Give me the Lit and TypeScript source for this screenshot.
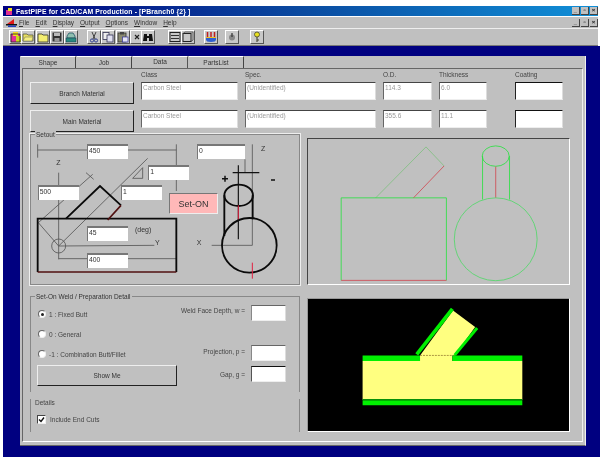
import { LitElement, html, svg, css } from "lit";
import { customElement } from "lit/decorators.js";

// toolbar glyphs, all drawn on a 12x12 box
const ICONS = {
  model: svg`<rect x="1" y="3" width="9" height="8" fill="#e0309a"/><rect x="3" y="1" width="5" height="4" fill="#f4e020"/><path d="M6 5h5v6H6z" fill="#c8d820"/><path d="M1 3h9v8H1z" fill="none" stroke="#222" stroke-width=".8"/>`,
  open: svg`<path d="M1 3h4l1 1h5v6H1z" fill="#e8e060" stroke="#554" stroke-width=".8"/><path d="M3 6h8l-1 4H1z" fill="#f4ee80" stroke="#665" stroke-width=".5"/>`,
  folder: svg`<path d="M1 3h4l1 1h5v7H1z" fill="#f4ee70" stroke="#443" stroke-width=".9"/>`,
  save: svg`<rect x="1.5" y="1.5" width="9" height="9" fill="#333"/><rect x="3" y="2" width="6" height="3" fill="#bbb"/><rect x="3.5" y="7" width="5" height="3.5" fill="#999"/>`,
  print: svg`<path d="M4 2h4l2 3v2H2V5z" fill="#8fbfb0" stroke="#256" stroke-width=".8"/><rect x="1" y="7" width="10" height="4" fill="#2a8a80" stroke="#134" stroke-width=".5"/>`,
  cut: svg`<path d="M4 1l3 7M8 1L5 8" stroke="#333" stroke-width=".9" fill="none"/><circle cx="4" cy="9.5" r="1.6" fill="none" stroke="#238" stroke-width=".9"/><circle cx="8" cy="9.5" r="1.6" fill="none" stroke="#238" stroke-width=".9"/>`,
  copy: svg`<rect x="1" y="1.5" width="6" height="7" fill="#eee" stroke="#335" stroke-width=".8"/><rect x="5" y="4" width="6" height="7" fill="#e0e0f0" stroke="#335" stroke-width=".8"/>`,
  paste: svg`<rect x="1" y="2" width="8" height="9" fill="#8a8a70" stroke="#333" stroke-width=".8"/><rect x="3" y="1" width="4" height="2.5" fill="#444"/><rect x="5.5" y="6" width="5.5" height="5" fill="#e4e4f4" stroke="#339" stroke-width=".7"/>`,
  del: svg`<path d="M4 4l4 4M8 4l-4 4" stroke="#222" stroke-width="1.1"/>`,
  find: svg`<path d="M2 3h3v2h2V3h3l1 7H7V7H5v3H1z" fill="#111"/>`,
  list: svg`<rect x="1" y="1.5" width="10" height="9" fill="none" stroke="#222"/><path d="M2 4.5h8M2 7.5h8" stroke="#333"/>`,
  frame: svg`<rect x="1" y="2.5" width="8" height="8" fill="none" stroke="#222"/><path d="M1 2.5l2-1.5h8v8l-2 1.5" fill="none" stroke="#444" stroke-width=".8"/>`,
  pipe: svg`<path d="M2.5 1v5M6 1v5M9.500 1v5" stroke="#c02020" stroke-width="1.500"/><path d="M1 7h10v1.500a5 2.500 0 0 1-10 0z" fill="#3060d0"/><path d="M1 6.500h10" stroke="#f0c020"/>`,
  weld: svg`<circle cx="6" cy="6.500" r="3" fill="#888"/><path d="M6 2v4" stroke="#333" stroke-width="1.200"/>`,
  key: svg`<circle cx="6" cy="3.500" r="2.500" fill="#e8e020" stroke="#443" stroke-width=".8"/><path d="M6 6v5M6 9h2" stroke="#443" stroke-width="1.100"/>`,
};

const TOOLS: { icon: keyof typeof ICONS; gap: number }[] = [
  { icon: "model", gap: 0 },
  { icon: "open", gap: -2 },
  { icon: "folder", gap: 1 },
  { icon: "save", gap: 0 },
  { icon: "print", gap: 0 },
  { icon: "cut", gap: 9 },
  { icon: "copy", gap: 0 },
  { icon: "paste", gap: 1 },
  { icon: "del", gap: 0 },
  { icon: "find", gap: -3 },
  { icon: "list", gap: 13 },
  { icon: "frame", gap: -1 },
  { icon: "pipe", gap: 9 },
  { icon: "weld", gap: 7 },
  { icon: "key", gap: 11 },
];

const MENUS = [
  ["F", "ile"],
  ["E", "dit"],
  ["D", "isplay"],
  ["O", "utput"],
  ["O", "ptions"],
  ["W", "indow"],
  ["H", "elp"],
];

// inputs over the setout sketch, in the sketch's own units (3 per pixel)
const SETOUT_FIELDS = [
  { value: "450", x: 198, y: 55 },
  { value: "0", x: 528, y: 55, w: 48 },
  { value: "1", x: 382, y: 118 },
  { value: "500", x: 50, y: 178 },
  { value: "1", x: 300, y: 178 },
  { value: "45", x: 198, y: 300 },
  { value: "400", x: 198, y: 380 },
];

@customElement("app-root")
export class AppRoot extends LitElement {
  static styles = css`
    :host {
      display: block;
      width: 602px;
      height: 461px;
      box-sizing: border-box;
      padding: 6px 2px 4px 3px;
      background: #fff;
      font-family: "Liberation Sans", Arial, sans-serif;
      font-size: 6.5px;
      color: #333;
      overflow: hidden;
      filter: blur(0.35px);
    }
    .title {
      display: flex;
      align-items: center;
      height: 10px;
      margin-right: 2px;
      padding-left: 2px;
      background: linear-gradient(90deg, #000080 0%, #0a4aa0 50%, #1090d8 100%);
      color: #fff;
      font-weight: 700;
      font-size: 6.85px;
      letter-spacing: 0.12px;
      gap: 2px;
    }
    .spacer {
      flex: 1;
    }
    .ctrls {
      display: flex;
      gap: 1px;
    }
    .ctrl {
      width: 8px;
      height: 8px;
      background: #c0c0c0;
      border-right: 1px solid #444;
      border-bottom: 1px solid #444;
      box-sizing: border-box;
      color: #111;
      font-size: 6px;
      line-height: 6px;
      text-align: center;
      font-weight: 700;
    }
    .menu {
      display: flex;
      align-items: center;
      height: 11px;
      margin-top: 1px;
      margin-right: 2px;
      padding-left: 3px;
      background: #c0c0c0;
      border-bottom: 1px solid #eee;
    }
    .menu svg {
      margin-right: 2px;
    }
    .menu span {
      margin-right: 6px;
      font-size: 6.5px;
      color: #333;
    }
    .menu u {
      text-decoration: underline;
    }
    .tools {
      display: flex;
      align-items: center;
      height: 17px;
      padding-left: 6px;
      margin-right: 2px;
      background: #c0c0c0;
      border-bottom: 1px solid #777;
      box-sizing: border-box;
    }
    .tool {
      display: flex;
      align-items: center;
      justify-content: center;
      width: 14px;
      height: 14px;
      box-sizing: border-box;
      background: #c8c8c8;
      border: 1px solid;
      border-color: #fff #555 #555 #fff;
    }
    .desk {
      height: 411px;
      box-sizing: border-box;
      padding: 10px 14px 11px 17px;
      background: #000080;
    }
    .panel {
      height: 390px;
      display: flex;
      flex-direction: column;
      background: #c0c0c0;
      box-sizing: border-box;
      border-right: 1px solid #eee;
      border-bottom: 1px solid #666;
    }
    .tabs {
      display: flex;
      height: 12px;
      padding-left: 1px;
    }
    .tab {
      width: 55px;
      margin-right: 1px;
      text-align: center;
      line-height: 11px;
      border-top: 1px solid #fff;
      border-right: 1px solid #444;
      box-sizing: border-box;
    }
    .tab.on {
      line-height: 9px;
      border-right: 1px solid #555;
    }
    .page {
      flex: 1;
      margin: 0 2px 3px 2px;
      padding: 1px 0 0 7px;
      border: 1px solid;
      border-color: #666 #eee #fff #666;
      box-sizing: border-box;
    }
    .mat {
      display: grid;
      grid-template-columns: 104px 97px 131px 49px 48px 69px;
      grid-template-rows: 12px 22px 28px;
      column-gap: 7px;
    }
    .mat .head {
      line-height: 9px;
      color: #444;
    }
    .mat .row2 {
      margin-top: 6px;
    }
    .mat .coat {
      justify-self: end;
      width: 48px;
    }
    .btn {
      display: flex;
      align-items: center;
      justify-content: center;
      background: #c0c0c0;
      border: 1px solid;
      border-color: #eee #222 #222 #eee;
      box-sizing: border-box;
      color: #333;
    }
    .field {
      height: 18px;
      background: #fff;
      border-top: 1px solid #444;
      border-left: 1px solid #666;
      border-right: 1px solid #ddd;
      border-bottom: 1px solid #eee;
      box-sizing: border-box;
      padding: 1px;
      color: #999;
      line-height: 8px;
    }
    .field.dark {
      border-color: #111 #ddd #eee #222;
    }
    .field.blank {
      height: 16px;
      border-color: #666 #ddd #eee #888;
    }
    .field.blank.dark {
      border-color: #111 #ddd #eee #555;
    }
    .lower {
      display: grid;
      grid-template-columns: 270px 263px;
      column-gap: 7px;
      margin-top: 2px;
    }
    .setout {
      position: relative;
      height: 151px;
      border: 1px solid #888;
      outline: 1px solid #eee;
      box-sizing: border-box;
    }
    .setout svg {
      display: block;
    }
    .legend {
      position: absolute;
      left: 4px;
      top: -4px;
      padding: 0 1px;
      background: #c0c0c0;
      line-height: 7px;
      color: #333;
    }
    .sf {
      position: absolute;
      width: 41px;
      height: 15px;
      background: #fff;
      border-top: 2px solid #777;
      border-left: 1px solid #777;
      box-sizing: border-box;
      padding-left: 1px;
      color: #333;
      font-size: 6.8px;
      line-height: 10px;
    }
    .seton {
      position: absolute;
      left: 138px;
      top: 58px;
      width: 49px;
      height: 21px;
      display: flex;
      align-items: center;
      justify-content: center;
      background: #ffb8b8;
      border: 1px solid;
      border-color: #777 #eee #eee #777;
      box-sizing: border-box;
      color: #333;
      font-size: 9px;
    }
    .view {
      height: 147px;
      margin-top: 4px;
      display: block;
      background: #c0c0c0;
      border: 1px solid;
      border-color: #444 #fff #fff #444;
      box-sizing: border-box;
    }
    .view.black {
      height: 134px;
      margin-top: 13px;
      background: #000;
      border-color: #999 #fff #fff #999;
    }
    .weld-col {
      margin-top: 11px;
    }
    .weld {
      position: relative;
      display: flex;
      justify-content: space-between;
      height: 96px;
      padding: 7px 13px 0 6px;
      border: 1px solid #888;
      border-bottom: 0;
      box-sizing: border-box;
    }
    .opts {
      display: flex;
      flex-direction: column;
      width: 140px;
    }
    .opt {
      display: flex;
      align-items: center;
      gap: 3px;
      height: 20px;
      padding-left: 1px;
      color: #444;
    }
    .dot {
      width: 8px;
      height: 8px;
      border-radius: 50%;
      background: #fff;
      border: 1px solid;
      border-color: #666 #eee #eee #666;
      box-sizing: border-box;
      display: flex;
      align-items: center;
      justify-content: center;
    }
    .dot.on::after {
      content: "";
      width: 3px;
      height: 3px;
      border-radius: 50%;
      background: #222;
    }
    .opts .btn {
      height: 21px;
      margin-top: 1px;
    }
    .depths {
      display: flex;
      flex-direction: column;
      gap: 5px;
      margin-top: 1px;
    }
    .depth {
      display: flex;
      align-items: center;
      justify-content: flex-end;
      gap: 6px;
      color: #444;
    }
    .depth .field {
      width: 35px;
    }
    .depth.first {
      margin-bottom: 19px;
    }
    .depth.first span {
      margin-top: -5px;
    }
    .depth.mid span {
      margin-top: -4px;
    }
    .details {
      box-sizing: border-box;
      height: 33px;
      margin-top: 7px;
      padding-left: 4px;
      border-left: 1px solid #888;
      border-right: 1px solid #888;
      color: #444;
      line-height: 7px;
    }
    .check {
      display: flex;
      align-items: center;
      gap: 4px;
      margin-top: 9px;
      padding-left: 2px;
    }
    .box {
      width: 7px;
      height: 7px;
      background: #fff;
      border: 1px solid;
      border-color: #444 #eee #eee #444;
      display: block;
    }
    .box svg {
      display: block;
    }
  `;

  private renderSetoutSketch() {
    return html`<svg width="270" height="151" viewBox="30 27 810 453">
      <g fill="none" stroke="#555" stroke-width="2.500">
        <path d="M50 55V95M50 72H466M466 55V195"/>
        <path d="M113 140V400M113 398H466M113 360L400 358"/>
        <path d="M380 97L113 360M52 290L215 145M195 140L218 160M52 290L113 360"/>
        <path d="M335 157L365 125V157Z"/>
        <circle cx="113" cy="360" r="21"/>
        <path d="M572 358H694M694 55V358M672 100V140"/>
      </g>
      <g fill="none" stroke="#0a0a0a" stroke-width="5.500">
        <path d="M135 278L237 180L300 238"/>
        <path d="M50 438V278H466V438"/>
        <ellipse cx="653" cy="208" rx="43" ry="32"/>
        <path d="M610 208V330M695 208V280"/>
        <circle cx="685" cy="358" r="82"/>
      </g>
      <path d="M652 118V340M635 140H715" stroke="#111" stroke-width="3.500"/>
      <path d="M300 238L260 282M50 438H466" stroke="#501010" stroke-width="5" fill="none"/>
      <path d="M652 238V280M694 410V458" stroke="#e02040" stroke-width="3"/>
      <path d="M603 158H621M612 149V167M750 162H762" stroke="#111" stroke-width="4.500"/>
      <g font-size="21" fill="#333" font-family="Liberation Sans, Arial, sans-serif">
        <text x="106" y="118">Z</text>
        <text x="720" y="74">Z</text>
        <text x="402" y="358">Y</text>
        <text x="527" y="358">X</text>
        <text x="342" y="318">(deg)</text>
      </g>
    </svg>`;
  }

  private renderOutline() {
    return html`<svg class="view" width="263" height="147" viewBox="22 38 788 441">
      <g fill="none" stroke-width="2.500">
        <path d="M225 217L378 62L433 120" stroke="#80c080"/>
        <path d="M120 468V217H440V468" stroke="#28e040"/>
        <path d="M433 120L340 217M120 468H440" stroke="#d04850"/>
        <ellipse cx="590" cy="90" rx="41" ry="31" stroke="#28e040"/>
        <path d="M550 90V222M632 90V222" stroke="#28e040"/>
        <path d="M590 122V217" stroke="#d04850"/>
        <circle cx="590" cy="343" r="126" stroke="#50d868"/>
      </g>
    </svg>`;
  }

  private renderWeldSection() {
    return html`<svg class="view black" width="263" height="134" viewBox="22 40 788 400">
      <path d="M186 228H360V211L460 75L527 125L465 211H458V228H670V345H186Z" fill="#ffff80"/>
      <path d="M186 211H360V228H186ZM458 211H670V228H458ZM186 347H670V362H186Z" fill="#00f000"/>
      <path d="M186 343H670V347H186Z" fill="#089008"/>
      <path d="M350 208L458 70" stroke="#00f000" stroke-width="11"/>
      <path d="M465 210L533 128" stroke="#00f000" stroke-width="9"/>
      <path d="M360 211H460" stroke="#806020" stroke-width="2" stroke-dasharray="6 3"/>
    </svg>`;
  }

  render() {
    const ctrls = html`<div class="ctrls">
      <div class="ctrl">_</div>
      <div class="ctrl">▫</div>
      <div class="ctrl">×</div>
    </div>`;
    return html`
      <div class="title">
        <svg width="9" height="9" viewBox="0 0 9 9">
          <path d="M1 3h6v5H1z" fill="#e03090"/><path d="M3 1h4v3H3z" fill="#f0e020"/>
        </svg>
        <span>FastPIPE for CAD/CAM Production - [PBranch0 {2} ]</span>
        <div class="spacer"></div>
        ${ctrls}
      </div>
      <div class="menu">
        <svg width="11" height="9" viewBox="0 0 11 9">
          <path d="M1 6L8 1v5z" fill="#e01818"/><path d="M0 6h11v1.500H0z" fill="#111"/><path d="M2 7.500h8V9H2z" fill="#2040c0"/>
        </svg>
        ${MENUS.map(([key, rest]) => html`<span><u>${key}</u>${rest}</span>`)}
        <div class="spacer"></div>
        ${ctrls}
      </div>
      <div class="tools">
        ${TOOLS.map(
          (t) => html`<div class="tool" style="margin-left:${t.gap}px">
            <svg width="12" height="12" viewBox="0 0 12 12">${ICONS[t.icon]}</svg>
          </div>`,
        )}
      </div>
      <div class="desk">
        <div class="panel">
          <div class="tabs">
            <div class="tab">Shape</div>
            <div class="tab">Job</div>
            <div class="tab on">Data</div>
            <div class="tab">PartsList</div>
          </div>
          <div class="page">
            <div class="mat">
              <div></div>
              <div class="head">Class</div>
              <div class="head">Spec.</div>
              <div class="head">O.D.</div>
              <div class="head">Thickness</div>
              <div class="head coat">Coating</div>

              <div class="btn">Branch Material</div>
              <div class="field">Carbon Steel</div>
              <div class="field">(Unidentified)</div>
              <div class="field">114.3</div>
              <div class="field">6.0</div>
              <div class="field coat dark"></div>

              <div class="btn row2">Main Material</div>
              <div class="field row2">Carbon Steel</div>
              <div class="field row2">(Unidentified)</div>
              <div class="field row2">355.6</div>
              <div class="field row2">11.1</div>
              <div class="field coat dark row2"></div>
            </div>
            <div class="lower">
              <div class="setout">
                <div class="legend">Setout</div>
                ${this.renderSetoutSketch()}
                ${SETOUT_FIELDS.map(
                  (f) => html`<div
                    class="sf"
                    style="left:${(f.x - 30) / 3}px;top:${(f.y - 27) / 3}px;${f.w ? `width:${f.w}px` : ""}"
                  >
                    ${f.value}
                  </div>`,
                )}
                <div class="seton">Set-ON</div>
              </div>
              ${this.renderOutline()}
              <div class="weld-col">
                <div class="weld">
                  <div class="legend">Set-On Weld / Preparation Detail</div>
                  <div class="opts">
                    <div class="opt"><span class="dot on"></span>1 : Fixed Butt</div>
                    <div class="opt"><span class="dot"></span>0 : General</div>
                    <div class="opt"><span class="dot"></span>-1 : Combination Butt/Fillet</div>
                    <div class="btn">Show Me</div>
                  </div>
                  <div class="depths">
                    <div class="depth first">
                      <span>Weld Face Depth, w =</span>
                      <div class="field blank"></div>
                    </div>
                    <div class="depth mid">
                      <span>Projection, p =</span>
                      <div class="field blank"></div>
                    </div>
                    <div class="depth">
                      <span>Gap, g =</span>
                      <div class="field blank dark"></div>
                    </div>
                  </div>
                </div>
                <div class="details">
                  Details
                  <div class="check">
                    <span class="box">
                      <svg width="7" height="7" viewBox="0 0 7 7">
                        <path d="M1 3.500L3 5.500L6 1.500" fill="none" stroke="#111" stroke-width="1.400"/>
                      </svg>
                    </span>
                    Include End Cuts
                  </div>
                </div>
              </div>
              ${this.renderWeldSection()}
            </div>
          </div>
        </div>
      </div>
    `;
  }
}
